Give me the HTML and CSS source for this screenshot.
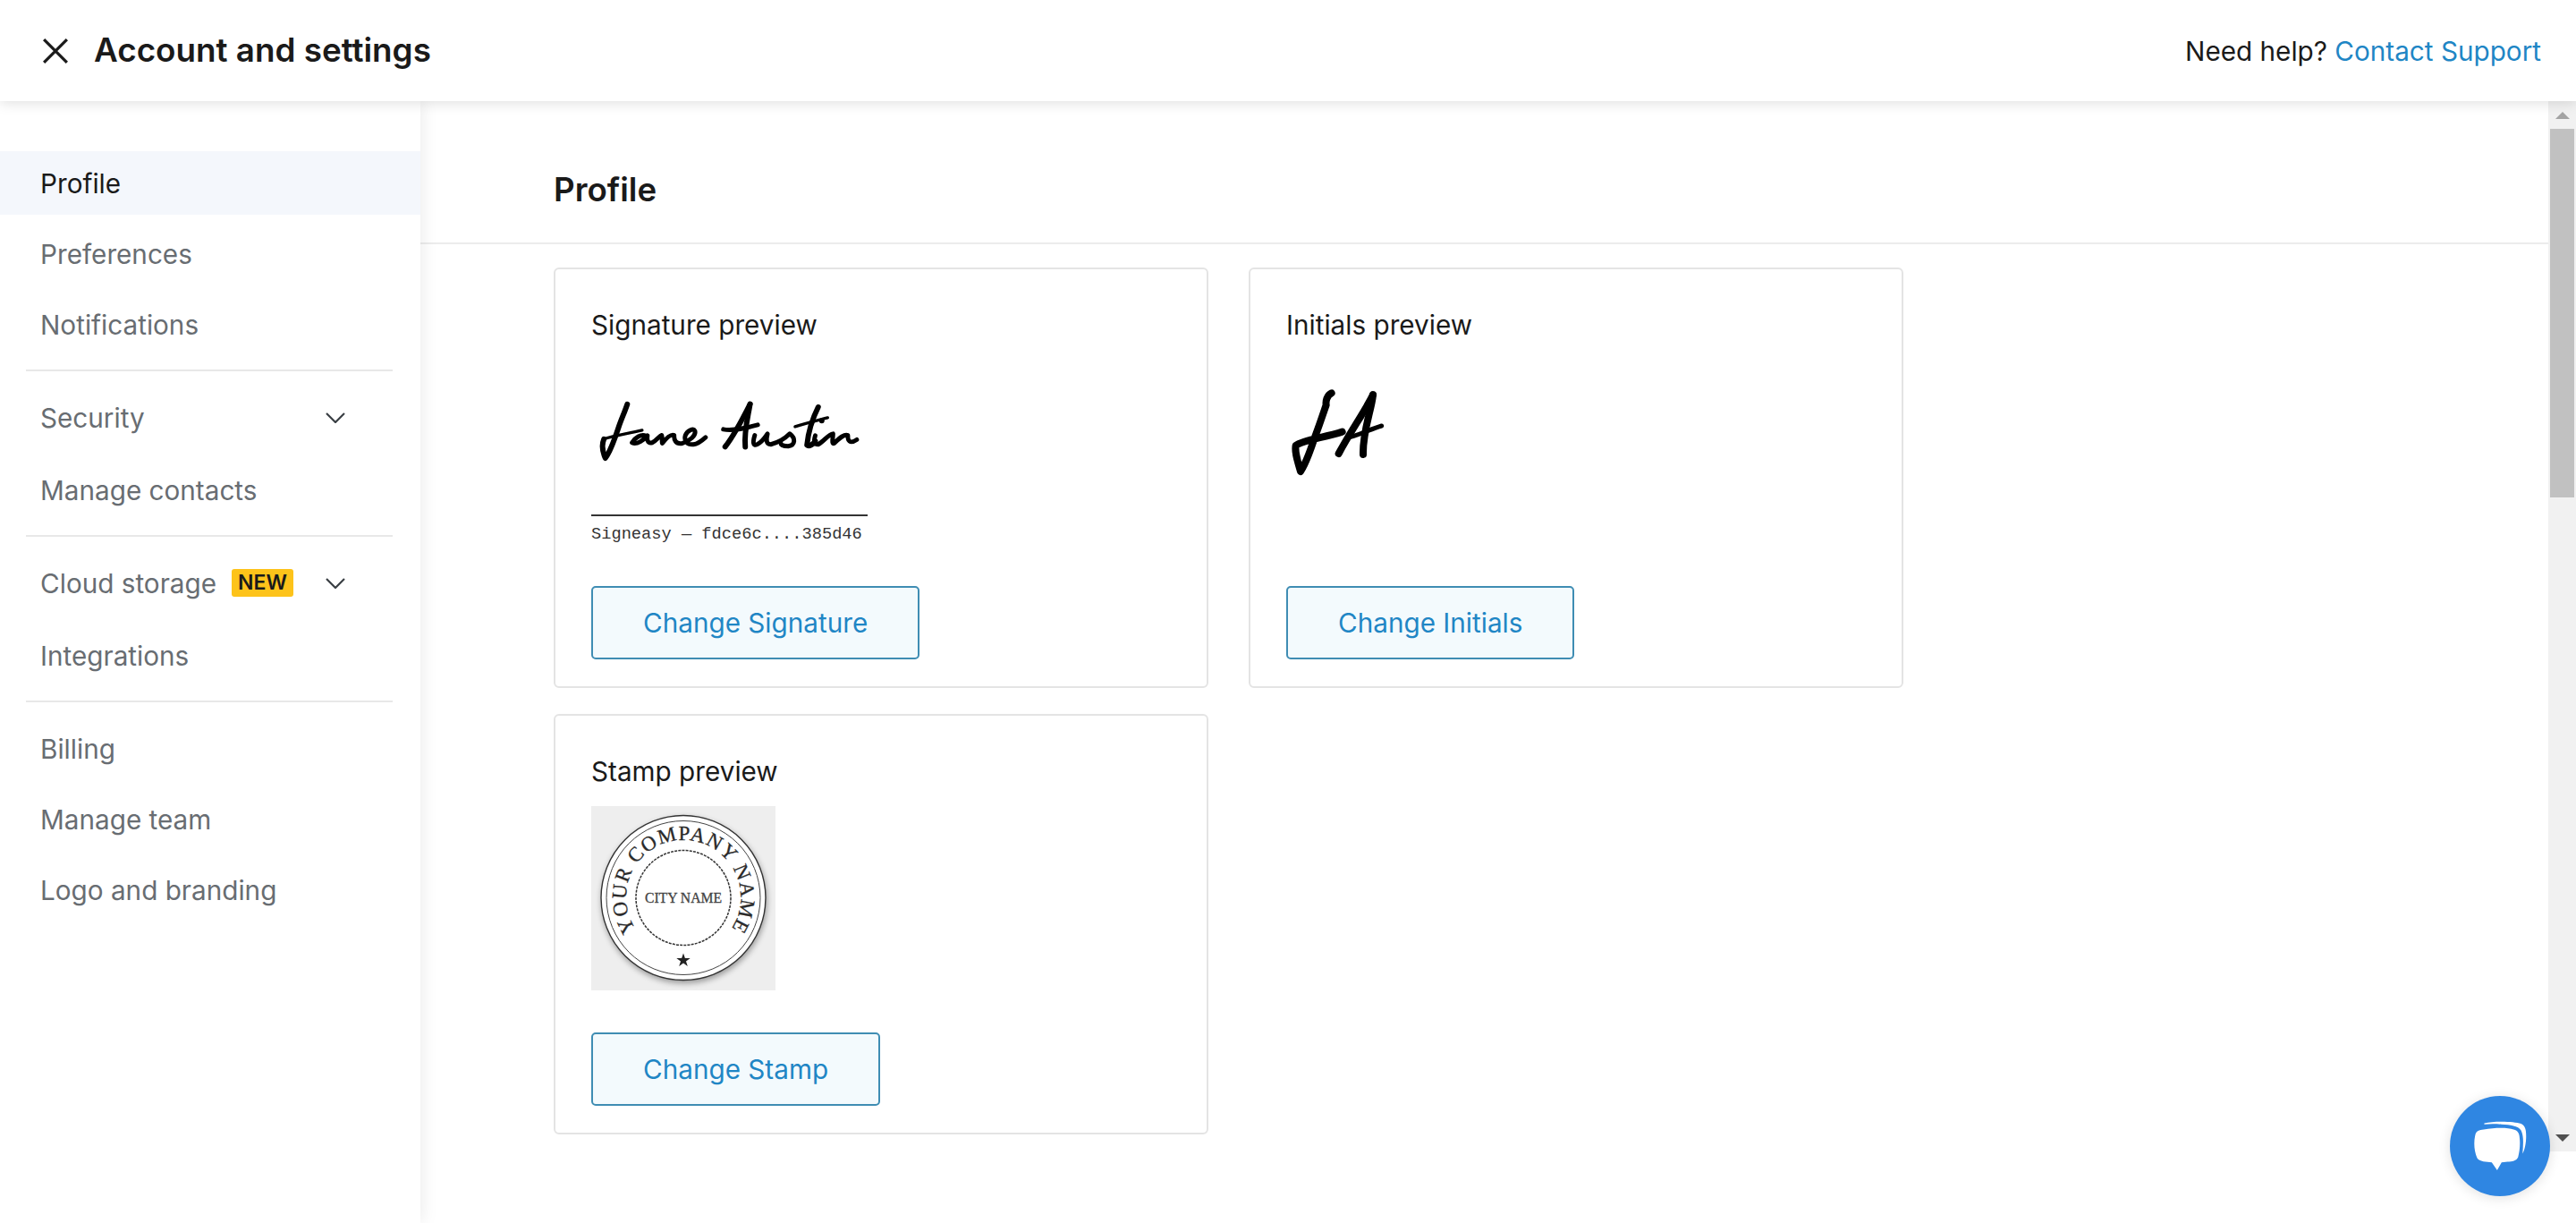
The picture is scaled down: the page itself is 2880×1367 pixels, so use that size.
FILE: index.html
```html
<!DOCTYPE html>
<html lang="en">
<head>
<meta charset="utf-8">
<title>Account and settings</title>
<link rel="stylesheet" href="styles.css">
</head>
<body>
<div class="page">
  <header class="topbar">
    <div class="topbar-left">
      <svg class="close-icon" viewBox="0 0 28 28" aria-label="Close"><path d="M2 2 26 26M26 2 2 26"/></svg>
      <h1 class="app-title">Account and settings</h1>
    </div>
    <p class="help">Need help? <a class="help-link" href="#">Contact Support</a></p>
  </header>
  <div class="body-row">
    <nav class="sidebar">
      <div class="nav-group">
        <a class="nav-item active" href="#">Profile</a>
        <a class="nav-item" href="#">Preferences</a>
        <a class="nav-item" href="#">Notifications</a>
      </div>
      <hr class="nav-rule">
      <div class="nav-group wide">
        <a class="nav-item" href="#">Security
          <svg class="chevron" viewBox="0 0 22 12"><path d="M1 1 11 11 21 1"/></svg></a>
        <a class="nav-item" href="#">Manage contacts</a>
      </div>
      <hr class="nav-rule">
      <div class="nav-group wide">
        <a class="nav-item" href="#">Cloud storage <span class="badge">NEW</span>
          <svg class="chevron" viewBox="0 0 22 12"><path d="M1 1 11 11 21 1"/></svg></a>
        <a class="nav-item" href="#">Integrations</a>
      </div>
      <hr class="nav-rule">
      <div class="nav-group">
        <a class="nav-item" href="#">Billing</a>
        <a class="nav-item" href="#">Manage team</a>
        <a class="nav-item" href="#">Logo and branding</a>
      </div>
    </nav>
    <main class="content">
      <div class="content-head"><h2 class="page-title">Profile</h2></div>
      <div class="cards">
        <section class="card">
          <h3 class="card-title">Signature preview</h3>
          <div class="preview">
            <svg class="sig-art" viewBox="63 -60 927 522" role="img" aria-label="Handwritten signature">
              <g class="ink">
                <path class="thick" d="M182 90C172 120 162 140 152 170C138 212 125 250 108 272C98 250 96 225 103 208"/>
                <path d="M103 208C135 195 185 190 232 178"/>
                <path class="mid" d="M245 197C228 190 208 203 198 220C215 228 238 210 250 196C248 210 250 224 266 220C282 212 290 197 298 195C301 205 298 216 300 222C316 202 330 190 340 195C339 210 345 226 368 222C392 214 415 196 410 180C405 170 385 178 378 195C372 215 385 228 405 226C420 224 435 212 446 202"/>
                <path class="thick" d="M596 90C576 130 546 190 512 234"/>
                <path class="thick" d="M596 90C590 130 575 180 580 234"/>
                <path class="mid" d="M506 175C540 182 585 170 622 160"/>
                <path class="mid" d="M612 195C606 215 604 232 620 226C640 216 650 196 655 190C650 210 650 226 666 226C690 220 715 205 730 190C750 205 750 228 725 232C710 232 700 228 700 222"/>
                <path class="thick" d="M826 100C806 140 792 190 788 228C795 235 810 225 816 215"/>
                <path d="M748 166C780 156 820 146 858 136"/>
                <path class="mid" d="M816 196C810 216 812 226 826 226C846 215 860 192 876 190C876 205 870 226 880 222C900 202 915 190 926 195C925 212 932 226 956 210"/>
                <circle class="dot" cx="838" cy="146" r="9"/>
              </g>
            </svg>
            <div class="sig-caption">Signeasy — fdce6c....385d46</div>
          </div>
          <button class="change-btn" type="button">Change Signature</button>
        </section>
        <section class="card">
          <h3 class="card-title">Initials preview</h3>
          <div class="preview">
            <svg class="initials-art" viewBox="54 -30 360 390" role="img" aria-label="Handwritten initials">
              <g class="ink">
                <path class="heavy" d="M206 82C190 90 186 110 188 122C175 160 165 190 150 230C135 275 122 315 102 345C92 310 82 280 86 258C110 240 180 232 242 212"/>
                <path class="heavy" d="M345 88C320 140 270 210 230 285"/>
                <path class="heavy" d="M345 88C340 140 310 210 312 288"/>
                <path class="heavy-thin" d="M258 232C290 226 340 202 374 192"/>
              </g>
            </svg>
          </div>
          <button class="change-btn" type="button">Change Initials</button>
        </section>
        <section class="card">
          <h3 class="card-title">Stamp preview</h3>
          <div class="preview">
            <svg class="stamp" viewBox="0 0 206 206" role="img" aria-label="Company stamp">
              <defs>
                <path id="stamp-arc" d="M103 166A64 64 0 1 1 103 38A64 64 0 1 1 103 166"/>
              </defs>
              <circle class="stamp-disc" cx="103" cy="102.500" r="92"/>
              <circle class="stamp-ring" cx="103" cy="102.500" r="86"/>
              <circle class="stamp-scallop" cx="103" cy="102.500" r="53"/>
              <text class="stamp-arc-text"><textPath href="#stamp-arc" startOffset="50%" text-anchor="middle">YOUR COMPANY NAME</textPath></text>
              <text class="stamp-city" x="103" y="108" text-anchor="middle">CITY NAME</text>
              <path class="stamp-star" d="M103 164.500l1.900 5.500h5.800l-4.700 3.400 1.800 5.500-4.800-3.400-4.800 3.400 1.800-5.500-4.700-3.400h5.800z"/>
            </svg>
          </div>
          <button class="change-btn" type="button">Change Stamp</button>
        </section>
      </div>
    </main>
    <div class="scrollbar" aria-hidden="true">
      <span class="arrow-up"></span>
      <span class="thumb"></span>
      <span class="arrow-down"></span>
    </div>
  </div>
  <button class="chat" type="button" aria-label="Chat">
    <svg viewBox="297 135 335 335">
      <path class="chat-shape" d="M410 247C450 240 490 240 510 247C525 250 530 262 530 275C533 295 530 320 525 340C520 352 505 355 490 355L470 357L455 383L437 357C420 355 395 355 388 342C378 320 376 290 382 265C385 252 395 248 410 247Z"/>
      <path class="chat-shape" d="M412 226C450 218 510 220 535 228C550 235 552 250 552 270C552 290 548 315 540 328C542 300 545 270 535 250C525 235 500 232 470 230C450 228 430 228 412 230Z"/>
    </svg>
  </button>
</div>
</body>
</html>
```
FILE: styles.css
```css
* { box-sizing: border-box; }
html, body { margin: 0; height: 100%; overflow: hidden; }
body { font-family: Inter, "Liberation Sans", sans-serif; color: #1a1a1a; background: #fff; }

.page { position: relative; display: flex; flex-direction: column; height: 100vh; }

.topbar {
  position: relative; z-index: 3; flex: none;
  height: 113px; display: flex; align-items: center; justify-content: space-between;
  padding: 0 39px 0 47px; background: #fff;
  box-shadow: 0 2px 14px rgba(0,0,0,.13);
}
.topbar-left { display: flex; align-items: center; gap: 28px; }
.close-icon { width: 30px; height: 30px; fill: none; stroke: #1a1a1a; stroke-width: 3; }
.app-title { margin: 0; font-size: 36.800px; font-weight: 600; line-height: 1.2; }
.help { margin: 0; font-size: 29.700px; }
.help-link { color: #1f86c5; text-decoration: none; }

.body-row { flex: 1; display: flex; min-height: 0; }

.sidebar {
  position: relative; z-index: 2; flex: none; width: 470px; padding-top: 56px;
  background: #fff; box-shadow: 2px 0 18px rgba(0,0,0,.08);
}
.nav-group { display: flex; flex-direction: column; gap: 8px; }
.nav-group.wide { gap: 10px; }
.nav-item {
  display: flex; align-items: center; height: 71px; padding: 0 52px 0 45px;
  font-size: 29.700px; color: #686d72; text-decoration: none;
}
.nav-item.active { background: #f4f7fc; color: #1a1a1a; }
.nav-rule { height: 2px; margin: 15px 31px 16px 29px; border: 0; background: #e8e8e8; }
.chevron { width: 22px; height: 12px; margin-left: auto; margin-right: 32px; fill: none; stroke: #3a3f44; stroke-width: 2.200; }
.badge {
  display: inline-block; margin-left: 17px; padding: 0 7px; height: 31px; line-height: 31px;
  border-radius: 3px; background: #fdc31a; color: #1a1a1a; font-size: 23px; font-weight: 600;
}

.content { flex: 1; min-width: 0; }
.content-head { height: 160px; padding: 73px 0 0 149px; border-bottom: 2px solid #ececec; }
.page-title { margin: 0; font-size: 36.700px; font-weight: 600; line-height: 52px; }

.cards {
  display: grid; grid-template-columns: 732px 732px; grid-auto-rows: 470px;
  gap: 29px 45px; padding: 26px 0 0 149px;
}
.card {
  display: flex; flex-direction: column; align-items: flex-start;
  padding: 42px 40px 0; border: 2px solid #e4e4e4; border-radius: 6px; background: #fff;
}
.card-title { margin: 0; height: 42px; font-size: 29.700px; font-weight: 400; line-height: 40px; }
.preview { height: 206px; margin: 17px 0 47px; }

.sig-art { display: block; width: 309px; height: 175px; border-bottom: 2px solid #333; }
.sig-caption { margin-top: 9px; font-family: "Liberation Mono", monospace; font-size: 18.700px; color: #333; }
.initials-art { display: block; width: 120px; height: 130px; }

.ink { fill: none; stroke: #000; stroke-linecap: round; stroke-linejoin: round; stroke-width: 10; }
.ink .mid { stroke-width: 15; }
.ink .thick { stroke-width: 18; }
.ink .heavy { stroke-width: 24; }
.ink .heavy-thin { stroke-width: 15; }
.ink .dot { fill: #000; stroke: none; }

.stamp { display: block; width: 206px; height: 206px; background: #eee; }
.stamp-disc { fill: #fff; stroke: #333; stroke-width: 1.400; filter: drop-shadow(1px 3px 3px rgba(0,0,0,.35)); }
.stamp-ring { fill: none; stroke: #444; stroke-width: 1; }
.stamp-scallop { fill: none; stroke: #333; stroke-width: 1.500; stroke-dasharray: 3 1.200; }
.stamp-arc-text { font-family: "Liberation Serif", serif; font-size: 23px; letter-spacing: 1.200px; fill: #2a2a2a; stroke: #2a2a2a; stroke-width: .3px; }
.stamp-city { font-family: "Liberation Serif", serif; font-size: 15.700px; fill: #444; stroke: #444; stroke-width: .3px; }
.stamp-star { fill: #222; }

.change-btn {
  height: 82px; padding: 0 56px; border: 2px solid #3f8db3; border-radius: 5px;
  background: #f3fafd; color: #1f86c5; font: 400 29.700px Inter, "Liberation Sans", sans-serif;
}

.scrollbar {
  position: relative; z-index: 2; flex: none; align-self: flex-start;
  display: flex; flex-direction: column; align-items: center;
  width: 31px; height: 1174px; background: #f1f1f1;
}
.arrow-up, .arrow-down { width: 0; height: 0; border-left: 8px solid transparent; border-right: 8px solid transparent; }
.arrow-up { margin-top: 12px; border-bottom: 8px solid #a3a3a3; }
.thumb { width: 27px; height: 412px; margin-top: 11px; background: #c1c1c1; }
.arrow-down { margin-top: auto; margin-bottom: 11px; border-top: 8px solid #505050; }

.chat {
  position: absolute; left: 2739px; top: 1225px; z-index: 4; width: 112px; height: 112px;
  padding: 0; border: 0; border-radius: 50%; background: #2f86e2;
  box-shadow: 0 2px 14px rgba(0,0,0,.12);
}
.chat svg { display: block; width: 112px; height: 112px; }
.chat-shape { fill: #fff; }
```
